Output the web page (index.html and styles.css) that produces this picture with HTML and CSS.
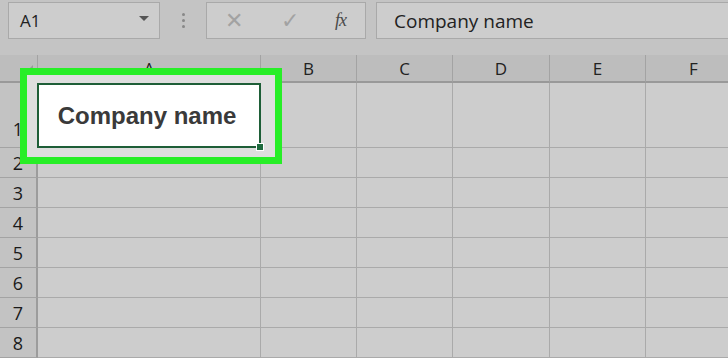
FILE: index.html
```html
<!DOCTYPE html>
<html lang="en">
<head>
  <meta charset="UTF-8" />
  <title>Company name</title>
  <link rel="stylesheet" href="styles.css">
</head>
<body>

  <div class="toolbar">
    <div class="name-box">
      <span>A1</span>
      <span class="caret"></span>
    </div>
    <div class="dots"><i></i><i></i><i></i></div>
    <div class="fx-buttons">
      <span class="fx-btn">&#x2715;</span>
      <span class="fx-btn">&#x2713;</span>
      <span class="fx-btn fx">fx</span>
    </div>
    <div class="formula">Company name</div>
  </div>

  <div class="sheet">
    <div class="corner"><span class="tri"></span></div>
    <div class="col-head">A</div>
    <div class="col-head">B</div>
    <div class="col-head">C</div>
    <div class="col-head">D</div>
    <div class="col-head">E</div>
    <div class="col-head">F</div>

    <div class="row-head tall">1</div>
    <div class="cell selected">Company name<span class="handle"></span></div>
    <div class="cell"></div><div class="cell"></div><div class="cell"></div><div class="cell"></div><div class="cell"></div>

    <div class="row-head">2</div>
    <div class="cell"></div><div class="cell"></div><div class="cell"></div><div class="cell"></div><div class="cell"></div><div class="cell"></div>
    <div class="row-head">3</div>
    <div class="cell"></div><div class="cell"></div><div class="cell"></div><div class="cell"></div><div class="cell"></div><div class="cell"></div>
    <div class="row-head">4</div>
    <div class="cell"></div><div class="cell"></div><div class="cell"></div><div class="cell"></div><div class="cell"></div><div class="cell"></div>
    <div class="row-head">5</div>
    <div class="cell"></div><div class="cell"></div><div class="cell"></div><div class="cell"></div><div class="cell"></div><div class="cell"></div>
    <div class="row-head">6</div>
    <div class="cell"></div><div class="cell"></div><div class="cell"></div><div class="cell"></div><div class="cell"></div><div class="cell"></div>
    <div class="row-head">7</div>
    <div class="cell"></div><div class="cell"></div><div class="cell"></div><div class="cell"></div><div class="cell"></div><div class="cell"></div>
    <div class="row-head">8</div>
    <div class="cell"></div><div class="cell"></div><div class="cell"></div><div class="cell"></div><div class="cell"></div><div class="cell"></div>

    <div class="highlight"></div>
  </div>

</body>
</html>
```

FILE: styles.css
```css
* {
  box-sizing: border-box;
}
body {
  margin: 0;
  width: 728px;
  height: 358px;
  overflow: hidden;
  background: #c4c4c4;
  font-family: 'Open Sans', sans-serif;
  color: #222;
}
.toolbar {
  height: 55px;
  display: flex;
  align-items: flex-start;
  padding-top: 2px;
  padding-left: 8px;
}
.name-box, .fx-buttons, .formula {
  height: 37px;
  background: #cdcdcd;
  border: 1px solid #a9a9a9;
}
.name-box {
  width: 152px;
  display: flex;
  align-items: center;
  justify-content: space-between;
  padding: 0 10px 0 11px;
  font-size: 17px;
}
.caret {
  width: 0;
  height: 0;
  border-left: 5px solid transparent;
  border-right: 5px solid transparent;
  border-top: 5px solid #555;
  margin-top: -4px;
}
.dots {
  width: 46px;
  height: 37px;
  display: flex;
  flex-direction: column;
  align-items: center;
  justify-content: center;
  gap: 3px;
}
.dots i {
  width: 3px;
  height: 3px;
  border-radius: 50%;
  background: #888;
}
.fx-buttons {
  width: 160px;
  display: flex;
  align-items: center;
  padding-left: 18px;
}
.fx-btn {
  width: 56px;
  font-size: 22px;
  color: #a2a2a2;
  font-family: 'DejaVu Sans', sans-serif;
}
.fx-btn.fx {
  width: auto;
  margin-left: -2px;
  font-family: 'Liberation Serif', serif;
  font-style: italic;
  letter-spacing: -1px;
  color: #4a4a4a;
  font-size: 18px;
}
.formula {
  flex: 1;
  margin-left: 10px;
  margin-right: -20px;
  padding-left: 17px;
  display: flex;
  align-items: center;
  font-size: 19px;
  color: #222;
}
.sheet {
  position: relative;
  display: grid;
  grid-template-columns: 38px 223px 96px 96px 97px 96px 96px;
  grid-template-rows: 28px 65px repeat(7, 30px);
  background: #cdcdcd;
}
.corner, .col-head {
  background: #bdbdbd;
  border-bottom: 2px solid #999;
  border-right: 1px solid #a3a3a3;
}
.corner {
  position: relative;
}
.tri {
  position: absolute;
  right: 4px;
  bottom: 4px;
  width: 0;
  height: 0;
  border-left: 12px solid transparent;
  border-bottom: 12px solid #9a9a9a;
}
.col-head {
  display: flex;
  align-items: center;
  justify-content: center;
  font-size: 17px;
  padding-top: 1px;
}
.row-head {
  background: #c3c3c3;
  border-right: 2px solid #9c9c9c;
  border-bottom: 1px solid #a3a3a3;
  display: flex;
  align-items: flex-end;
  justify-content: center;
  padding-bottom: 2px;
  font-size: 18px;
  color: #1a1a1a;
}
.row-head.tall {
  padding-bottom: 6px;
}
.cell {
  border-right: 1px solid #aaa;
  border-bottom: 1px solid #aaa;
}
.selected {
  position: relative;
  z-index: 2;
  margin-left: -1px;
  background: #fff;
  border: 2px solid #1e5e37;
  display: flex;
  align-items: center;
  justify-content: center;
  padding-right: 4px;
  font-family: 'Liberation Sans', sans-serif;
  font-weight: bold;
  font-size: 24px;
  color: #3a3a3a;
}
.handle {
  position: absolute;
  right: -5px;
  bottom: -5px;
  width: 8px;
  height: 8px;
  background: #1e6b3e;
  border: 1px solid #fff;
}
.highlight {
  position: absolute;
  z-index: 1;
  left: 20px;
  top: 13px;
  width: 262px;
  height: 96px;
  border: 7px solid #27ee27;
  background: #dedede;
}
```
